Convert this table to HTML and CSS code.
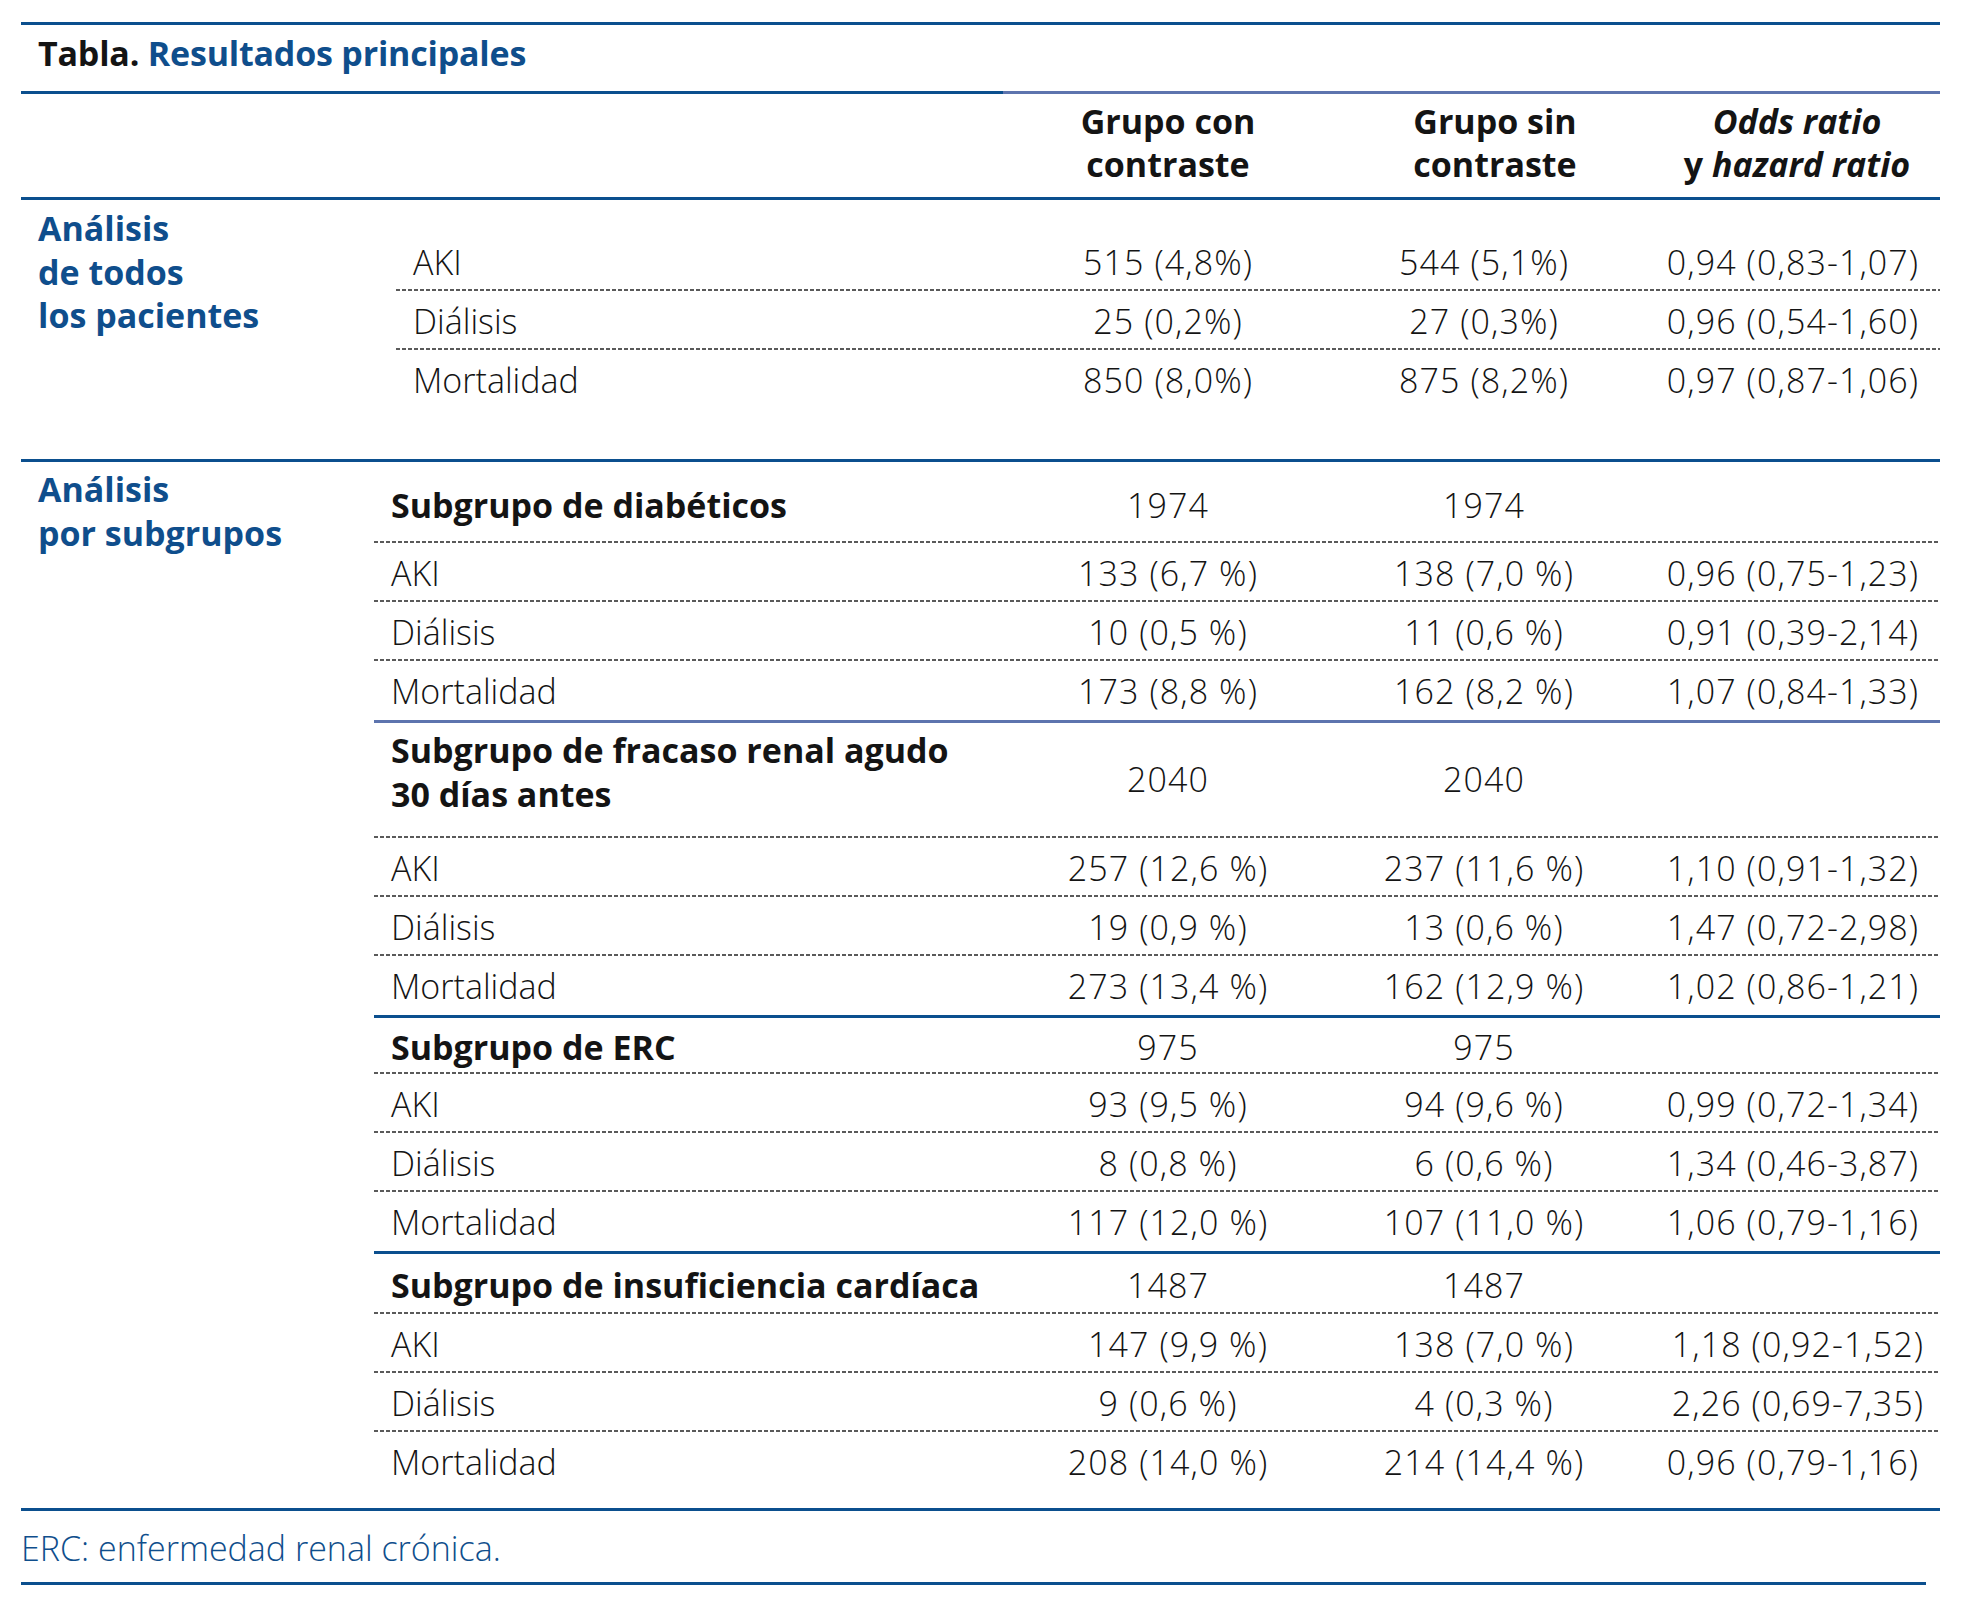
FILE: index.html
```html
<!DOCTYPE html>
<html lang="es">
<head>
<meta charset="utf-8">
<title>Tabla. Resultados principales</title>
<link rel="stylesheet" href="styles.css">
</head>
<body>
<div class="page">
  <div class="title"><span class="t-black">Tabla.</span> <span class="t-blue">Resultados principales</span></div>
  <div class="split-rule"></div>
  <div class="head">
    <div></div>
    <div class="hcell">Grupo con<br>contraste</div>
    <div class="hcell h2">Grupo sin<br>contraste</div>
    <div class="hcell h3"><i>Odds ratio</i><br>y <i>hazard ratio</i></div>
  </div>

  <div class="section s1">
    <div class="sec-label">Análisis<br>de todos<br>los pacientes</div>
    <div class="sec-body">
      <div class="row"><div class="lab">AKI</div><div class="val">515 (4,8%)</div><div class="val">544 (5,1%)</div><div class="val">0,94 (0,83-1,07)</div></div>
      <div class="row"><div class="lab">Diálisis</div><div class="val">25 (0,2%)</div><div class="val">27 (0,3%)</div><div class="val">0,96 (0,54-1,60)</div></div>
      <div class="row last"><div class="lab">Mortalidad</div><div class="val">850 (8,0%)</div><div class="val">875 (8,2%)</div><div class="val">0,97 (0,87-1,06)</div></div>
    </div>
  </div>

  <div class="section s2">
    <div class="sec-label">Análisis<br>por subgrupos</div>
    <div class="sec-body">
      <div class="group g1">
        <div class="row sg sg1"><div class="lab">Subgrupo de diabéticos</div><div class="val">1974</div><div class="val">1974</div><div class="val"></div></div>
        <div class="row"><div class="lab">AKI</div><div class="val">133 (6,7 %)</div><div class="val">138 (7,0 %)</div><div class="val">0,96 (0,75-1,23)</div></div>
        <div class="row"><div class="lab">Diálisis</div><div class="val">10 (0,5 %)</div><div class="val">11 (0,6 %)</div><div class="val">0,91 (0,39-2,14)</div></div>
        <div class="row last"><div class="lab">Mortalidad</div><div class="val">173 (8,8 %)</div><div class="val">162 (8,2 %)</div><div class="val">1,07 (0,84-1,33)</div></div>
      </div>
      <div class="group g2">
        <div class="row sg sg2"><div class="lab">Subgrupo de fracaso renal agudo<br>30 días antes</div><div class="val">2040</div><div class="val">2040</div><div class="val"></div></div>
        <div class="row"><div class="lab">AKI</div><div class="val">257 (12,6 %)</div><div class="val">237 (11,6 %)</div><div class="val">1,10 (0,91-1,32)</div></div>
        <div class="row"><div class="lab">Diálisis</div><div class="val">19 (0,9 %)</div><div class="val">13 (0,6 %)</div><div class="val">1,47 (0,72-2,98)</div></div>
        <div class="row last"><div class="lab">Mortalidad</div><div class="val">273 (13,4 %)</div><div class="val">162 (12,9 %)</div><div class="val">1,02 (0,86-1,21)</div></div>
      </div>
      <div class="group g3">
        <div class="row sg sg3"><div class="lab">Subgrupo de ERC</div><div class="val">975</div><div class="val">975</div><div class="val"></div></div>
        <div class="row"><div class="lab">AKI</div><div class="val">93 (9,5 %)</div><div class="val">94 (9,6 %)</div><div class="val">0,99 (0,72-1,34)</div></div>
        <div class="row"><div class="lab">Diálisis</div><div class="val">8 (0,8 %)</div><div class="val">6 (0,6 %)</div><div class="val">1,34 (0,46-3,87)</div></div>
        <div class="row last"><div class="lab">Mortalidad</div><div class="val">117 (12,0 %)</div><div class="val">107 (11,0 %)</div><div class="val">1,06 (0,79-1,16)</div></div>
      </div>
      <div class="group g4">
        <div class="row sg sg4"><div class="lab">Subgrupo de insuficiencia cardíaca</div><div class="val">1487</div><div class="val">1487</div><div class="val"></div></div>
        <div class="row"><div class="lab">AKI</div><div class="val nudge">147 (9,9 %)</div><div class="val">138 (7,0 %)</div><div class="val nudge-s">1,18 (0,92-1,52)</div></div>
        <div class="row"><div class="lab">Diálisis</div><div class="val">9 (0,6 %)</div><div class="val">4 (0,3 %)</div><div class="val nudge-s">2,26 (0,69-7,35)</div></div>
        <div class="row last"><div class="lab">Mortalidad</div><div class="val">208 (14,0 %)</div><div class="val">214 (14,4 %)</div><div class="val">0,96 (0,79-1,16)</div></div>
      </div>
    </div>
  </div>

  <div class="foot">ERC: enfermedad renal crónica.</div>
</div>
</body>
</html>
```

FILE: styles.css
```css
* { box-sizing: border-box; }

body {
  margin: 0;
  background: #ffffff;
  font-family: "Open Sans", "Noto Sans", "DejaVu Sans", sans-serif;
  font-size: 34px;
  color: #141414;
}

.page {
  width: 1919px;
  margin-left: 21px;
  padding-top: 22px;
}

.title {
  border-top: 3px solid #0b4f8e;
  height: 69px;
  padding: 8px 0 0 17px;
  line-height: 40px;
  font-weight: 700;
  white-space: nowrap;
  letter-spacing: -0.2px;
}

.t-black { color: #141414; }
.t-blue { color: #0f4e8c; }

.split-rule {
  height: 3px;
  background: linear-gradient(to right, #0b4f8e 0, #0b4f8e 982px, #5d74ae 982px, #5d74ae 100%);
}

.head {
  display: grid;
  grid-template-columns: 1fr 308px 324px 294px;
  height: 106px;
  align-items: center;
  border-bottom: 3px solid #0b4f8e;
  font-weight: 700;
  line-height: 43px;
  text-align: center;
  padding-bottom: 6px;
}

.hcell i { font-style: italic; }
.h2 { padding-left: 22px; }
.h3 { padding-left: 8px; }

.section { display: flex; }

.sec-label {
  color: #0f4e8c;
  font-weight: 700;
  line-height: 43.5px;
  padding-left: 17px;
}

.s1 .sec-label { width: 375px; padding-top: 7px; }
.s1 .sec-body { flex: 1; padding: 32px 0 50px; }

.s2 {
  border-top: 3px solid #0b4f8e;
  border-bottom: 3px solid #0b4f8e;
}
.s2 .sec-label { width: 353px; padding-top: 6px; }
.s2 .sec-body { flex: 1; padding-bottom: 17px; }

.row {
  display: grid;
  grid-template-columns: 1fr 308px 324px 294px;
  height: 59px;
  align-items: center;
  font-weight: 300;
  background-image: repeating-linear-gradient(to right, #5a5a5a 0, #5a5a5a 4px, transparent 4px, transparent 6px);
  background-size: 100% 2px;
  background-position: left bottom;
  background-repeat: no-repeat;
  padding-top: 1px;
}

.row.last { background-image: none; }

.lab { padding-left: 17px; }
.val { text-align: center; white-space: nowrap; letter-spacing: 1.1px; }
.nudge { padding-left: 20px; }
.nudge-s { padding-left: 10px; }

.sg .lab { font-weight: 700; }
.sg1 { height: 81px; padding-top: 5px; }
.sg2 { height: 115px; }
.sg2 .lab { line-height: 44px; padding-bottom: 18px; }
.sg2 .val { padding-bottom: 4px; }
.sg3 { height: 56px; }
.sg4 { height: 60px; }

.group { border-bottom: 3px solid #0b4f8e; }
.g1 { border-bottom-color: #5d74ae; }
.g4 { border-bottom: none; }

.foot {
  width: 1905px;
  height: 74px;
  display: flex;
  align-items: center;
  padding-top: 3px;
  color: #0f4e8c;
  font-weight: 300;
  border-bottom: 3px solid #0b4f8e;
}
```
